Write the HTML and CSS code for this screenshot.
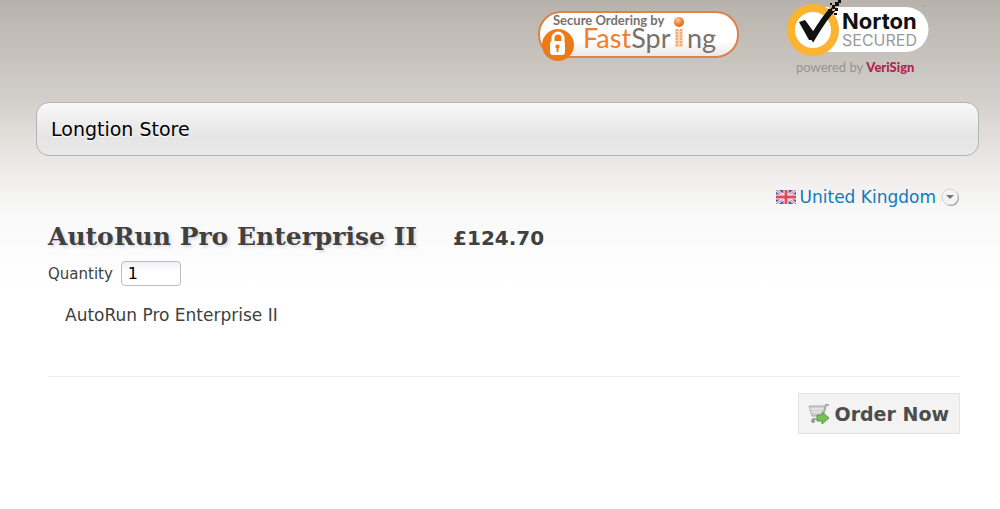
FILE: index.html
```html
<!DOCTYPE html>
<html lang="en">
<head>
<meta charset="utf-8">
<meta name="viewport" content="width=device-width, initial-scale=1">
<title>Longtion Store</title>
<link rel="stylesheet" href="styles.css">
</head>
<body>
<header class="badges">
  <svg class="badge-fastspring" viewBox="0 0 204 56" role="img" aria-label="Secure Ordering by FastSpring">
    <defs>
      <linearGradient id="pill" x1="0" y1="0" x2="0" y2="1"><stop offset="0.65" stop-color="#fff"/><stop offset="1" stop-color="#e9e7e6"/></linearGradient>
      <radialGradient id="ball" cx="0.4" cy="0.3" r="0.7"><stop offset="0" stop-color="#ffd2ac"/><stop offset="0.5" stop-color="#f68a3c"/><stop offset="1" stop-color="#d9641a"/></radialGradient>
    </defs>
    <rect x="3" y="4" width="199" height="45" rx="22" fill="url(#pill)" stroke="#dd8345" stroke-width="2"/>
    <circle cx="22" cy="37" r="16" fill="#ee7a16"/>
    <path d="M17 34v-4a5 5 0 0 1 10 0v4" fill="none" stroke="#fff" stroke-width="3"/>
    <rect x="14" y="33" width="15" height="14" rx="3" fill="#fff"/>
    <path d="M21.500 36.500a2 2 0 0 1 1 3.800V44h-2v-3.700a2 2 0 0 1 1-3.800" fill="#ee7a16"/>
    <text class="badge-small" x="17" y="17">Secure Ordering by</text>
    <text class="badge-brand" x="47" y="40"><tspan class="orange">Fast</tspan>Spr</text>
    <circle cx="143" cy="14" r="5" fill="url(#ball)"/>
    <rect x="139" y="21" width="8" height="18" fill="#fbd6bb"/>
    <path d="M141 21v18M145 21v18" stroke="#f4a873" stroke-width="2" stroke-dasharray="2 1"/>
    <text class="badge-brand" x="151" y="40">ng</text>
  </svg>
  <svg class="badge-norton" viewBox="0 0 146 78" role="img" aria-label="Norton Secured, powered by VeriSign">
    <path d="M30 7h92a22 22 0 0 1 0 45H30z" fill="#fff"/>
    <circle cx="29" cy="30" r="22" fill="#fff" stroke="#fbb431" stroke-width="8"/>
    <path d="M19 23l10 14C35 27 42 16 49 9" fill="none" stroke="#111" stroke-width="6"/>
    <path d="M15 22l6-2 8 11v9h-4z" fill="#111"/>
    <path d="M44 9h5v5h-5zM48 5h4v4h-4zM51 8h3v3h-3zM51 2h4v4h-4zM46 3h2v2h-2zM54 0h3v3h-3zM50 13h3v2h-3z" fill="#111"/>
    <path d="M48 9h2v2h-2zM51 6h2v2h-2zM45 7h2v2h-2z" fill="#d9b16b"/>
    <text class="norton-name" x="58" y="29">Norton</text>
    <text class="norton-secured" x="58" y="46">SECURED</text>
    <text class="norton-tm" x="139" y="9">™</text>
    <text class="norton-powered" x="12" y="72">powered by <tspan class="verisign">VeriSign</tspan></text>
  </svg>
</header>
<div class="store-bar">Longtion Store</div>
<main class="content">
  <div class="country-row">
    <a class="country" href="#">
      <svg class="flag" viewBox="0 0 20 14" aria-hidden="true">
        <path d="M0 0h20v14H0z" fill="#4b5aa0"/>
        <path d="M0 0l20 14M20 0L0 14" stroke="#f1e8f0" stroke-width="3"/>
        <path d="M0 0l20 14M20 0L0 14" stroke="#d9707f" stroke-width="1"/>
        <path d="M10 0v14M0 7h20" stroke="#fff" stroke-width="5"/>
        <path d="M10 0v14M0 7h20" stroke="#e2495a" stroke-width="3"/>
      </svg>
      <span>United Kingdom</span>
      <svg class="arrow" viewBox="0 0 20 20" aria-hidden="true">
        <circle cx="11" cy="11" r="8" fill="#999"/>
        <circle cx="10" cy="10" r="8" fill="#f4f4f4" stroke="#d4d4d4"/>
        <path d="M6 8h8l-4 4z" fill="#777"/>
      </svg>
    </a>
  </div>
  <div class="product-head">
    <h1 class="product-name">AutoRun Pro Enterprise II</h1>
    <span class="price">£124.70</span>
  </div>
  <div class="quantity">
    <label for="quantity">Quantity</label>
    <input class="quantity-input" id="quantity" type="text" value="1">
  </div>
  <p class="description">AutoRun Pro Enterprise II</p>
  <div class="actions">
    <button class="order" type="button">
      <svg class="cart" viewBox="0 0 22 20" aria-hidden="true">
        <path d="M1 2h16l-2 10H4z" fill="#cfcfcf" stroke="#aaa"/>
        <path d="M2 5h14M3 8h12" stroke="#f4f4f4"/>
        <path d="M21 1h-3l-4 14H4" fill="none" stroke="#aaa" stroke-width="2"/>
        <circle cx="5" cy="17" r="2" fill="#999"/>
        <path d="M9 11h5V8l7 6-7 6v-3H9z" fill="#79bd55" stroke="#5a9c48"/>
      </svg>
      <span>Order Now</span>
    </button>
  </div>
</main>
</body>
</html>
```
FILE: styles.css
```css
* { box-sizing: border-box; }
html { background: #fff; }
body {
  margin: 0;
  color: #404040;
  font-family: Verdana, "DejaVu Sans", sans-serif;
  font-size: 17px;
  background: linear-gradient(#b8b2ac 0, #d3cfca 100px, #e7e3e0 150px, #f4f2f1 190px, #f8f8f8 210px, #fcfcfc 250px, #fff 290px) no-repeat;
}
.badges {
  display: flex;
  justify-content: flex-end;
  align-items: flex-start;
  gap: 44px;
  height: 102px;
  padding-right: 70px;
}
.badge-fastspring { width: 204px; height: 56px; margin-top: 8px; }
.badge-norton { width: 146px; height: 78px; overflow: visible; }
.badge-small { font: bold 13px Lato, sans-serif; fill: #77716d; }
.badge-brand { font: 27px Lato, sans-serif; fill: #77716d; }
.orange { fill: #f07f2b; }
.norton-name { font: bold 22px Inter, sans-serif; fill: #111; }
.norton-secured { font: 16px Inter, sans-serif; fill: #999; }
.norton-tm { font: 5px Inter, sans-serif; fill: #999; }
.norton-powered { font: 13px Lato, sans-serif; fill: #989390; }
.verisign { font-weight: 900; fill: #b02350; }
.store-bar {
  margin: 0 21px 0 36px;
  padding: 15px 14px;
  border: 1px solid #b5b3b1;
  border-radius: 13px;
  background: linear-gradient(#f8f8f8, #e5e5e5 65%, #e8e8e8);
  color: #000;
  font-size: 19px;
  line-height: 22px;
  text-shadow: 0 1px 1px #fff;
}
.content { padding: 28px 40px 75px 48px; }
.country-row { display: flex; justify-content: flex-end; }
.country {
  display: flex;
  align-items: center;
  gap: 4px;
  color: #0d7abf;
  line-height: 26px;
  text-decoration: none;
}
.flag { width: 20px; height: 14px; }
.arrow { width: 20px; height: 20px; }
.product-head { display: flex; align-items: baseline; gap: 36px; margin-top: 11px; }
.product-name {
  margin: 0;
  font-family: "DejaVu Serif", serif;
  font-size: 25px;
  line-height: 32px;
  text-shadow: 2px 2px 3px #dcdce0;
}
.price { font-size: 20px; font-weight: bold; }
.quantity { display: flex; align-items: center; gap: 8px; margin-top: 8px; font-size: 15px; }
.quantity-input {
  width: 60px;
  height: 25px;
  padding: 0 6px;
  border: 1px solid #bcbcc4;
  border-radius: 4px;
  background: linear-gradient(#f0f0f4, #fff 40%);
  color: #000;
  font: 16px Verdana, "DejaVu Sans", sans-serif;
}
.description { margin: 18px 0 50px 17px; line-height: 22px; }
.actions {
  display: flex;
  justify-content: flex-end;
  padding-top: 16px;
  border-top: 1px solid #ececec;
}
.order {
  display: flex;
  align-items: center;
  gap: 4px;
  height: 41px;
  padding: 0 10px 0 9px;
  border: 1px solid #e4e4e4;
  background: #f3f3f3;
  color: #4d4d4d;
  font: bold 19px Verdana, "DejaVu Sans", sans-serif;
}
.cart { width: 22px; height: 20px; }
```
